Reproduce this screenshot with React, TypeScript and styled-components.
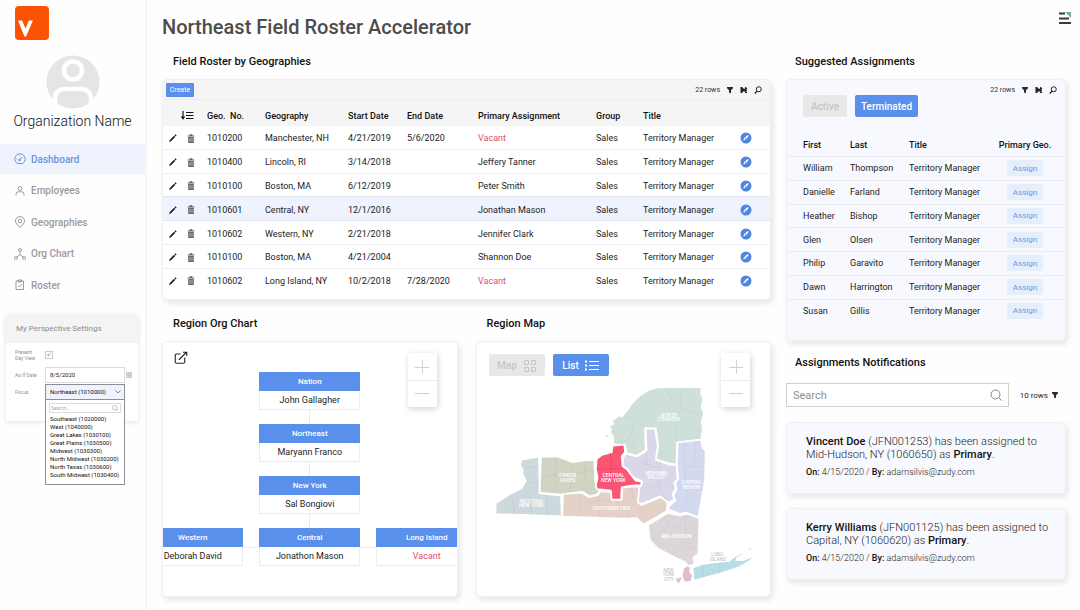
import React from "react";
import styled, { createGlobalStyle } from "styled-components";

const blue = "#5a8fec";

const GlobalStyle = createGlobalStyle`
  *, *::before, *::after { box-sizing: border-box; }
  body {
    margin: 0;
    background: #fefefe;
    color: #1c1c1c;
    font-family: Roboto, "Liberation Sans", sans-serif;
    font-size: 9px;
  }
  button, input, select { font-family: inherit; margin: 0; }
  svg { display: block; }
`;

const Page = styled.div`
  display: flex;
  min-height: 100vh;
`;

/* ---------- sidebar ---------- */

const Sidebar = styled.aside`
  flex: 0 0 147px;
  border-right: 2px solid #f6f6f8;
  padding-top: 6px;
`;

const Logo = styled.svg`
  margin-left: 15px;
`;

const Avatar = styled.svg`
  margin: 15px auto 0;
`;

const OrgName = styled.div`
  margin-top: 2px;
  text-align: center;
  font-size: 14px;
  font-weight: 300;
  line-height: 20px;
  white-space: nowrap;
  color: #111;
`;

const Nav = styled.nav`
  display: flex;
  flex-direction: column;
  justify-content: space-between;
  height: 156px;
  margin-top: 13px;
`;

const NavLink = styled.a<{ $active?: boolean }>`
  display: flex;
  align-items: center;
  gap: 5px;
  height: 30px;
  padding-left: 14px;
  font-size: 10px;
  font-weight: 500;
  text-decoration: none;
  color: ${(p) => (p.$active ? "#6c93d8" : "#9b9b9b")};
  background: ${(p) => (p.$active ? "#eff3fd" : "transparent")};
`;

const Settings = styled.section`
  width: 132px;
  height: 107px;
  margin: 14px 0 0 6px;
  border-radius: 3px;
  background: #fff;
  box-shadow: 0 1px 5px rgba(0, 0, 0, 0.12);
`;

const SettingsTitle = styled.h2`
  margin: 0 0 3px;
  padding-left: 10px;
  border-radius: 3px 3px 0 0;
  background: #f4f4f5;
  font-size: 8px;
  font-weight: 400;
  line-height: 29px;
  color: #8b8b8b;
`;

const SettingRow = styled.div`
  display: grid;
  grid-template-columns: 29px 80px 1fr;
  align-items: center;
  column-gap: 1px;
  height: 17px;
  padding-left: 9px;
  &:first-of-type { margin-bottom: 3px; }
`;

const SettingLabel = styled.label`
  font-size: 5px;
  line-height: 6px;
  color: #8f8f8f;
`;

const SettingCheck = styled.input`
  appearance: none;
  width: 8px;
  height: 8px;
  border: 1px solid #c9c9c9;
  background: #fff;
  &:checked::after {
    content: "";
    display: block;
    width: 2px;
    height: 4px;
    margin: 0 0 0 2px;
    border: solid #aaa;
    border-width: 0 1px 1px 0;
    transform: rotate(40deg);
  }
`;

const DateInput = styled.input`
  width: 80px;
  height: 16px;
  padding: 0 4px;
  border: 1px solid #dcdcdc;
  background: #fff;
  font-size: 6px;
  color: #222;
`;

const FocusBox = styled.div`
  position: relative;
  height: 16px;
`;

const FocusSelect = styled.select`
  appearance: none;
  width: 80px;
  height: 16px;
  padding: 0 4px;
  border: 1px solid #8d8f96;
  border-radius: 0;
  background: #eef3fd;
  font-size: 6px;
  color: #111;
`;

const FocusArrow = styled.svg`
  position: absolute;
  right: 4px;
  top: 6px;
  pointer-events: none;
`;

const FocusMenu = styled.div`
  position: absolute;
  left: 0;
  top: 15px;
  width: 80px;
  height: 86px;
  padding: 3px 3px 0;
  border: 1px solid #8d8f96;
  background: #fff;
`;

const FocusSearch = styled.div`
  display: flex;
  align-items: center;
  height: 10px;
  margin-bottom: 2px;
  padding-right: 2px;
  border: 1px solid #dcdcdc;
  input {
    flex: 1;
    min-width: 0;
    padding: 0 1px;
    border: 0;
    outline: 0;
    background: none;
    font-size: 5px;
    line-height: 8px;
    height: 8px;
  }
  input::placeholder { color: #aaa; }
`;

const FocusList = styled.ul`
  margin: 0;
  padding: 0 0 0 1px;
  list-style: none;
  font-size: 6px;
  line-height: 8px;
  white-space: nowrap;
  color: #111;
`;

/* ---------- main area ---------- */

const Main = styled.main`
  flex: 1;
  min-width: 0;
`;

const Header = styled.header`
  display: flex;
  justify-content: space-between;
  align-items: flex-start;
  height: 54px;
  padding: 11px 8px 0 15px;
`;

const PageTitle = styled.h1`
  margin: 0;
  font-size: 20px;
  font-weight: 500;
  line-height: 32px;
  color: #4c4c4c;
`;

const IconButton = styled.button`
  display: flex;
  align-items: center;
  justify-content: center;
  padding: 0;
  border: 0;
  background: none;
  color: #2b2b2b;
`;

const Content = styled.div`
  display: grid;
  grid-template-columns: minmax(0, 1fr) 280px;
  column-gap: 15px;
  align-items: start;
  padding: 0 14px 14px 15px;
`;

const SplitRow = styled.div`
  display: grid;
  grid-template-columns: minmax(0, 1fr) minmax(0, 1fr);
  column-gap: 18px;
  margin-top: 16px;
`;

const SectionTitle = styled.h2`
  margin: 0 0 9px;
  padding-left: 11px;
  font-size: 11px;
  font-weight: 500;
  line-height: 16px;
  color: #111;
`;

const SideColumn = styled.div`
  ${SectionTitle} { padding-left: 9px; }
`;

const Card = styled.div<{ $tint?: boolean }>`
  position: relative;
  overflow: hidden;
  border: 1px solid #f0f0f3;
  border-radius: 5px;
  background: ${(p) => (p.$tint ? "#f8f9fe" : "#fff")};
  box-shadow: 2px 3px 6px rgba(0, 0, 0, 0.1);
`;

const RosterCard = styled(Card)`
  padding-bottom: 8px;
`;

const RosterBar = styled.div`
  display: flex;
  align-items: center;
  justify-content: space-between;
  height: 20px;
  padding: 0 8px 0 3px;
  border-bottom: 1px solid #ececee;
  background: #f5f5f5;
`;

const CreateButton = styled.button`
  width: 28px;
  height: 14px;
  padding: 0;
  border: 0;
  border-radius: 1px;
  background: ${blue};
  font-size: 7px;
  color: #fff;
`;

const Tools = styled.div`
  display: flex;
  align-items: center;
  gap: 6px;
  font-size: 7px;
  color: #333;
`;

const DataTable = styled.table`
  width: 100%;
  border-collapse: separate;
  border-spacing: 0;
  table-layout: fixed;
  font-size: 9px;
  line-height: 12px;
  white-space: nowrap;
  th, td { padding: 0; text-align: left; vertical-align: middle; }
  th { font-weight: 500; color: #111; }
`;

const RosterTable = styled(DataTable)`
  height: 191px;
  thead tr { height: 26px; }
  th { padding-top: 5px; background: #f5f5f5; }
  td { padding-top: 2px; border-bottom: 1px solid #efeff1; }
  tbody tr:last-child td { border-bottom: 0; }
`;

const RosterRow = styled.tr<{ $selected?: boolean }>`
  td {
    background: ${(p) => (p.$selected ? "#eff3fd" : "transparent")};
    ${(p) => p.$selected && "border-color: #dfe4ef; box-shadow: 0 -1px #dfe4ef;"}
  }
`;

const VacantText = styled.span`
  color: #e0506b;
`;

const IconCell = styled.td`
  && { padding-left: 6px; }
`;

/* ---------- org chart ---------- */

const PanelCard = styled(Card)`
  height: 256px;
`;

const ZoomControl = styled.div`
  position: absolute;
  top: 11px;
  right: 20px;
  width: 29px;
  border-radius: 2px;
  background: #fff;
  box-shadow: 1px 2px 6px rgba(0, 0, 0, 0.18);
  button {
    width: 29px;
    height: 27px;
    color: #d0d0d0;
  }
  button + button { border-top: 1px solid #ececec; }
`;

const PopOut = styled(IconButton)`
  position: absolute;
  left: 11px;
  top: 9px;
`;

const Tree = styled.div`
  display: flex;
  flex-direction: column;
  align-items: center;
  padding-top: 30px;
`;

const Link = styled.div`
  width: 1px;
  height: 14px;
  background: #e9e9ec;
`;

const Branch = styled.div`
  display: flex;
  justify-content: center;
`;

const SideLink = styled.div`
  width: 16px;
  height: 20px;
  border-bottom: 1px solid #ececee;
`;

const Node = styled.div`
  width: 101px;
  flex: none;
  text-align: center;
  border: 1px solid #ececee;
  border-top: 0;
  line-height: 18px;
  background: #fff;
`;

const NodeHead = styled.div`
  margin: 0 -1px;
  height: 19px;
  line-height: 19px;
  font-size: 8px;
  font-weight: 500;
  color: #fff;
  background: ${blue};
`;

/* ---------- map ---------- */

const ButtonRow = styled.div`
  display: flex;
  gap: 8px;
  padding: 12px 0 0 12px;
`;

const ToggleButton = styled.button<{ $on?: boolean; $width: number }>`
  display: flex;
  align-items: center;
  justify-content: center;
  gap: 6px;
  width: ${(p) => p.$width}px;
  height: 22px;
  padding: 0;
  border: 0;
  border-radius: 2px;
  font-size: 10px;
  font-weight: 500;
  color: ${(p) => (p.$on ? "#fff" : "#c6c6c6")};
  background: ${(p) => (p.$on ? blue : "#e8e8e8")};
`;

const MapDrawing = styled.svg`
  margin: 3px 0 0 8px;
`;

/* ---------- right column ---------- */

const SuggestedCard = styled(Card)`
  padding-bottom: 18px;
`;

const SuggestedBar = styled.div`
  display: flex;
  justify-content: space-between;
  align-items: flex-start;
  height: 53px;
  padding: 6px 8px 0 4px;
  ${ButtonRow} { padding-top: 9px; }
`;

const SuggestedTable = styled(DataTable)`
  height: 189px;
  thead tr { height: 24px; }
  th, td { border-bottom: 1px solid #eaecf2; }
  th:first-child, td:first-child { padding-left: 16px; }
  tbody tr:last-child td { border-bottom: 0; }
  th:last-child, td:last-child { text-align: center; }
`;

const AssignButton = styled.button`
  display: block;
  width: 36px;
  height: 16px;
  margin: 0 auto;
  padding: 0;
  border: 0;
  border-radius: 1px;
  background: #e6eefc;
  font-size: 8px;
  color: #6a98e8;
`;

const NoticeHead = styled(SectionTitle)`
  margin: 14px 0 12px;
`;

const SearchRow = styled.div`
  display: flex;
  align-items: center;
  justify-content: space-between;
  height: 24px;
  margin-bottom: 15px;
  padding-right: 7px;
`;

const SearchField = styled.div`
  display: flex;
  align-items: center;
  width: 223px;
  height: 24px;
  padding: 0 6px;
  border: 1px solid #cfcfcf;
  background: #fff;
  input {
    flex: 1;
    min-width: 0;
    padding: 0;
    border: 0;
    outline: 0;
    font-size: 11px;
  }
  input::placeholder { color: #8f8f8f; opacity: 1; }
`;

const RowCount = styled.div`
  display: flex;
  align-items: center;
  gap: 3px;
  font-size: 8px;
`;

const Notice = styled(Card)`
  height: 72px;
  margin-bottom: 14px;
  padding: 12px 0 0 19px;
  font-weight: 300;
  color: #222;
  p {
    margin: 0;
    font-size: 11px;
    line-height: 13px;
    white-space: nowrap;
  }
  p + p {
    margin-top: 5px;
    font-size: 9px;
  }
  b { font-weight: 500; color: #111; }
`;

/* ---------- icons ---------- */

const Pencil = () => (
  <svg width="8" height="8" viewBox="0 0 16 16" fill="#222">
    <path d="M0 16l1.500-4 8.500-8.500 2.500 2.500L4 14.500zM11 2.500l2-1.800 2.300 2.300-2 1.800z" />
  </svg>
);
const Trash = () => (
  <svg width="8" height="9" viewBox="0 0 14 16">
    <path d="M1 2.500h12v2H1zM4.500.5h5V3h-5zM2 5.500h10V16H2z" fill="#666" />
    <path d="M4.800 7v7M7 7v7M9.200 7v7" stroke="#ccc" strokeWidth="1" />
  </svg>
);
const Funnel = () => (
  <svg width="8" height="8" viewBox="0 0 16 16" fill="#2b2b2b">
    <path d="M2 2h12v2.500l-4 4v6l-4-1.500V8.500L2 4.500z" />
  </svg>
);
const Export = () => (
  <svg width="8" height="8" viewBox="0 0 16 16" fill="#222">
    <path d="M1 2h3l4 4 2-1V2h1l4 2.500L12 7h2v7h-4v-3H5v3H1z" />
    <path d="M11.500 9.500h1.500v2h-1.500z" fill="#f5f5f5" />
  </svg>
);
const Magnifier = () => (
  <svg width="8" height="8" viewBox="0 0 16 16" fill="none" stroke="#222" strokeWidth="2">
    <circle cx="9.500" cy="6.500" r="5" />
    <path d="M6 10.500L1.500 15" strokeWidth="2.600" />
  </svg>
);
const SearchGlass = ({ size }: { size: number }) => (
  <svg width={size} height={size} viewBox="0 0 16 16" fill="none" stroke="#808080" strokeWidth="1.300">
    <circle cx="7.300" cy="7.300" r="6" />
    <path d="M11.700 11.700L15.500 15.500" />
  </svg>
);
const SortIcon = () => (
  <svg width="13" height="9" viewBox="0 0 26 18" fill="none" stroke="#111" strokeWidth="2.400">
    <path d="M4 0v15M0.800 11L4 15.500 7.200 11M10 3h15M10 9h15M10 15h15" />
  </svg>
);
const Compass = () => (
  <svg width="12" height="12" viewBox="0 0 24 24">
    <circle cx="12" cy="12" r="11" fill="#4f86e0" />
    <path d="M6.500 17.500l1.800-5 5-5 4-1.500-1.300 4-5 5z" fill="#fff" />
    <path d="M9.500 14.500l3-3" stroke="#4f86e0" strokeWidth="1.200" />
  </svg>
);
const ZoomButtons = () => (
  <ZoomControl>
    <IconButton aria-label="Zoom in">
      <svg width="14" height="14" viewBox="0 0 14 14" stroke="currentColor"><path d="M0 7.500h14M7.500 0v14" /></svg>
    </IconButton>
    <IconButton aria-label="Zoom out">
      <svg width="14" height="14" viewBox="0 0 14 14" stroke="currentColor"><path d="M0 6.500h14" /></svg>
    </IconButton>
  </ZoomControl>
);
const ToolSet = () => (
  <Tools>
    <span>22 rows</span>
    <IconButton aria-label="Filter"><Funnel /></IconButton>
    <IconButton aria-label="Export"><Export /></IconButton>
    <IconButton aria-label="Find"><Magnifier /></IconButton>
  </Tools>
);

const navIcons: Record<string, React.ReactNode> = {
  Dashboard: (
    <>
      <path d="M6.500 21a10.500 10.500 0 1 1 11 0z" />
      <circle cx="11" cy="14" r="2" />
      <path d="M12.500 12.500L16.500 8M12 5v1M5 12h1" />
    </>
  ),
  Employees: (
    <>
      <circle cx="12" cy="7" r="4" />
      <path d="M4 21v-2.500a5 5 0 0 1 5-5h6a5 5 0 0 1 5 5V21" />
    </>
  ),
  Geographies: (
    <>
      <path d="M12 23C6 17.500 3 14 3 10a9 9 0 0 1 18 0c0 4-3 7.500-9 13z" />
      <circle cx="12" cy="10" r="3.500" />
    </>
  ),
  "Org Chart": (
    <>
      <circle cx="12" cy="4" r="3" />
      <circle cx="3.500" cy="20" r="3" />
      <circle cx="20.500" cy="20" r="3" />
      <path d="M12 7v6M12 13l-6 5M12 13l6 5" />
    </>
  ),
  Roster: (
    <>
      <path d="M4 4h15v17H4zM8 2h7v4H8z" />
      <path d="M8 13l3 3 5-6" />
    </>
  ),
};

/* ---------- data ---------- */

const roster = [
  ["1010200", "Manchester, NH", "4/21/2019", "5/6/2020", "Vacant"],
  ["1010400", "Lincoln, RI", "3/14/2018", "", "Jeffery Tanner"],
  ["1010100", "Boston, MA", "6/12/2019", "", "Peter Smith"],
  ["1010601", "Central, NY", "12/1/2016", "", "Jonathan Mason"],
  ["1010602", "Western, NY", "2/21/2018", "", "Jennifer Clark"],
  ["1010100", "Boston, MA", "4/21/2004", "", "Shannon Doe"],
  ["1010602", "Long Island, NY", "10/2/2018", "7/28/2020", "Vacant"],
];

const suggested = [
  ["William", "Thompson"],
  ["Danielle", "Farland"],
  ["Heather", "Bishop"],
  ["Glen", "Olsen"],
  ["Philip", "Garavito"],
  ["Dawn", "Harrington"],
  ["Susan", "Gillis"],
];

const focusOptions = [
  "Southeast (1020000)",
  "West (1040000)",
  "Great Lakes (1030100)",
  "Great Plains (1030500)",
  "Midwest (1030300)",
  "North Midwest (1030200)",
  "North Texas (1030600)",
  "South Midwest (1030400)",
];

const notices = [
  { name: "Vincent Doe", id: "JFN001253", place: "Mid-Hudson, NY (1060650)" },
  { name: "Kerry Williams", id: "JFN001125", place: "Capital, NY (1060620)" },
];

const regions = [
  { fill: "#cfe0d9", d: "M383 195L385 176 380 166 372 158 379 152 370 142 386 134 378 124 392 118 402 108 410 113 425 95 441 72 470 45 492 32 515 25 650 24 648 45 655 60 650 85 657 102 650 130 654 150 648 182 576 190 574 257 548 252 513 240 520 200 512 148 480 148 482 213 455 230 425 222 420 198Z" },
  { fill: "#cdd9dc", d: "M108 242L162 233 164 343 228 350 230 412 32 405 32 373 75 345 110 327 123 305 112 285 113 268 105 262Z" },
  { fill: "#d0d5c3", d: "M168 233L215 232 238 240 262 250 285 246 328 243 330 300 334 325 343 335 338 345 315 352 293 338 228 347 164 341Z" },
  { fill: "#e4d2c9", d: "M234 345L290 341 313 354 340 348 345 338 378 338 380 362 410 362 412 326 440 323 462 322 460 372 470 378 528 354 548 368 545 397 475 437 455 417 415 419 232 413Z" },
  { fill: "#dad7e8", d: "M482 150L510 148 518 200 512 242 548 256 574 258 578 300 568 310 572 330 562 348 570 360 550 372 525 352 470 375 459 370 463 325 470 318 470 306 445 295 425 268 412 262 415 235 424 224 455 233 485 215Z" },
  { fill: "#d3daef", d: "M578 190L648 183 652 205 662 215 660 300 652 350 640 415 600 400 585 405 548 390 555 378 572 365 565 350 575 330 570 312 580 300 576 260Z" },
  { fill: "#dcd6db", d: "M548 402L585 409 610 404 643 418 640 525 625 535 628 555 612 562 600 550 560 530 520 510 495 485 489 438Z" },
  { fill: "#fb5574", d: "M383 200L418 197 420 220 410 232 413 262 425 270 440 290 452 305 470 308 468 318 440 320 410 325 408 362 380 362 378 335 335 330 333 315 338 300 333 270 335 240 350 228 380 220Z" },
];

const mapLabels: [string, number, number][] = [
  ["NORTH", 552, 113], ["COUNTRY", 552, 127],
  ["FINGER", 248, 294], ["LAKES", 248, 308],
  ["CENTRAL", 385, 294], ["NEW YORK", 385, 308],
  ["MOHAWK", 514, 287], ["VALLEY", 514, 301],
  ["CAPITAL", 620, 315], ["REGION", 620, 329],
  ["WESTERN", 139, 371], ["NEW YORK", 139, 385],
  ["SOUTHERN TIER", 379, 394],
  ["MID-HUDSON", 575, 476],
];

const StateMap = () => (
  <MapDrawing width="280" height="220" viewBox="0 0 840 660" role="img" aria-label="New York regions">
    <g stroke="#fff" strokeWidth="5" strokeLinejoin="round">
      {regions.map((r) => (
        <path key={r.d} d={r.d} fill={r.fill} />
      ))}
    </g>
    <path
      d="M542 27L560 60 562 85M585 25L590 88 640 105M590 88L572 120 575 188M422 112L450 120 480 142M450 120L438 160 455 225M392 190L438 180M110 268L160 262M120 318L164 305M80 345L92 408M135 345L140 410M185 348L188 410M212 235L210 345M165 295L210 285 255 300M262 250L255 343M300 246L296 338M255 285L330 275M285 345L288 412M345 340L340 372 345 415M300 372L378 362M410 362L430 385 428 415M440 325L445 365M530 215L518 300 530 350M470 250L520 268M485 215L480 290M470 330L530 310M600 190L598 260 655 265M630 185L628 250M598 260L605 330 655 330M605 330L600 400M540 405L548 440 520 470M548 440L575 445 600 410M600 410L603 480 640 465M603 480L560 525M600 505L640 510"
      fill="none"
      stroke="#8a8f98"
      strokeOpacity="0.22"
      strokeWidth="1.500"
    />
    <path d="M335 270L412 268M375 222L378 262M378 300L380 335M378 268L375 300M338 300L378 305" fill="none" stroke="#e23b5c" strokeWidth="1.500" />
    <path d="M625 568L650 558 690 552 735 548 742 540 755 535 750 546 775 546 803 534 790 546 760 563 700 583 665 592 628 602Z" fill="#b8dde6" />
    <path d="M745 540L770 524M790 512L798 508M655 560L652 594M705 552L702 582" stroke="#a9ced8" strokeWidth="2" fill="none" />
    <path d="M597 570L606 563 614 566 612 578 621 590 616 605 600 607 594 592ZM573 600L590 596 580 613Z" fill="#e0bfd0" stroke="#c9a3b8" strokeWidth="1" />
    <path d="M361 168L370 172" stroke="#cfe0d9" strokeWidth="4" />
    <g fill="#fff" fontSize="15" fontWeight="500" textAnchor="middle">
      {mapLabels.map(([label, x, y]) => (
        <text key={label + x} x={x} y={y}>{label}</text>
      ))}
    </g>
    <g fill="#b9b9bd" fontSize="14" textAnchor="middle">
      <text x="697" y="531">LONG</text>
      <text x="699" y="545">ISLAND</text>
      <text x="551" y="578">NEW</text>
      <text x="551" y="592">YORK</text>
      <text x="551" y="606">CITY</text>
    </g>
  </MapDrawing>
);

const OrgNode = ({ title, name }: { title: string; name: string }) => (
  <Node>
    <NodeHead>{title}</NodeHead>
    {name === "Vacant" ? <VacantText>{name}</VacantText> : name}
  </Node>
);

export default function App() {
  return (
    <>
      <GlobalStyle />
      <Page>
        <Sidebar>
          <Logo width="34" height="34" viewBox="0 0 34 34" role="img" aria-label="Logo">
            <rect width="34" height="34" rx="4" fill="#fc5204" />
            <path d="M3 14.500L7 14.500 10.500 22.500 14 14.500 18 14.500 11 30.500 9.500 30.500Z" fill="#fff" />
          </Logo>
          <Avatar width="54" height="54" viewBox="0 0 54 54">
            <circle cx="27" cy="27" r="26.500" fill="#e5e5e5" />
            <circle cx="27" cy="15.500" r="9" fill="#e5e5e5" stroke="#fff" strokeWidth="4.500" />
            <path d="M9 54V43a9 9 0 0 1 9-9h18a9 9 0 0 1 9 9v11" fill="none" stroke="#fff" strokeWidth="4.500" />
          </Avatar>
          <OrgName>Organization Name</OrgName>
          <Nav>
            {Object.keys(navIcons).map((label) => (
              <NavLink key={label} href="#" $active={label === "Dashboard"}>
                <svg width="12" height="12" viewBox="0 0 24 24" fill="none" stroke="currentColor" strokeWidth="2">
                  {navIcons[label]}
                </svg>
                {label}
              </NavLink>
            ))}
          </Nav>
          <Settings>
            <SettingsTitle>My Perspective Settings</SettingsTitle>
            <SettingRow>
              <SettingLabel htmlFor="present">
                Present
                <br />
                Day View
              </SettingLabel>
              <SettingCheck id="present" type="checkbox" defaultChecked />
            </SettingRow>
            <SettingRow>
              <SettingLabel htmlFor="asof">As If Date</SettingLabel>
              <DateInput id="asof" defaultValue="8/5/2020" />
              <svg width="6" height="6" viewBox="0 0 12 12" fill="none" stroke="#999">
                <path d="M1 1h10v10H1zM1 4h10M1 7.500h10M4.500 1v10M8 1v10" />
              </svg>
            </SettingRow>
            <SettingRow>
              <SettingLabel htmlFor="focus">Focus</SettingLabel>
              <FocusBox>
                <FocusSelect id="focus">
                  <option>Northeast (1010000)</option>
                </FocusSelect>
                <FocusArrow width="6" height="4" viewBox="0 0 12 8" fill="none" stroke="#666" strokeWidth="1.600">
                  <path d="M1 1l5 5 5-5" />
                </FocusArrow>
                <FocusMenu>
                  <FocusSearch>
                    <input aria-label="Search focus" placeholder="Search..." />
                    <SearchGlass size={6} />
                  </FocusSearch>
                  <FocusList>
                    {focusOptions.map((o) => (
                      <li key={o}>{o}</li>
                    ))}
                  </FocusList>
                </FocusMenu>
              </FocusBox>
            </SettingRow>
          </Settings>
        </Sidebar>

        <Main>
          <Header>
            <PageTitle>Northeast Field Roster Accelerator</PageTitle>
            <IconButton aria-label="Menu">
              <svg width="14" height="14" viewBox="0 0 14 14">
                <path d="M1 2.500h6M1 7.500h10M1 12h12" stroke="#3b3b3b" strokeWidth="2" />
                <path d="M7 1h6v6z" fill="#77b38c" />
              </svg>
            </IconButton>
          </Header>
          <Content>
            <div>
              <SectionTitle>Field Roster by Geographies</SectionTitle>
              <RosterCard>
                <RosterBar>
                  <CreateButton>Create</CreateButton>
                  <ToolSet />
                </RosterBar>
                <RosterTable>
                  <colgroup>
                    <col width="18" /><col width="26" /><col width="58" /><col width="83" /><col width="59" />
                    <col width="71" /><col /><col width="47" /><col width="91" /><col width="36" />
                  </colgroup>
                  <thead>
                    <tr>
                      <th />
                      <th><SortIcon /></th>
                      <th>Geo.&nbsp; No.</th>
                      <th>Geography</th>
                      <th>Start Date</th>
                      <th>End Date</th>
                      <th>Primary Assignment</th>
                      <th>Group</th>
                      <th>Title</th>
                      <th />
                    </tr>
                  </thead>
                  <tbody>
                    {roster.map((r, i) => (
                      <RosterRow key={i} $selected={i === 3}>
                        <IconCell><IconButton aria-label="Edit"><Pencil /></IconButton></IconCell>
                        <IconCell><IconButton aria-label="Delete"><Trash /></IconButton></IconCell>
                        {r.map((cell, j) => (
                          <td key={j}>{cell === "Vacant" ? <VacantText>{cell}</VacantText> : cell}</td>
                        ))}
                        <td>Sales</td>
                        <td>Territory Manager</td>
                        <IconCell><IconButton aria-label="Locate"><Compass /></IconButton></IconCell>
                      </RosterRow>
                    ))}
                  </tbody>
                </RosterTable>
              </RosterCard>
              <SplitRow>
                <div>
                  <SectionTitle>Region Org Chart</SectionTitle>
                  <PanelCard>
                    <PopOut aria-label="Open in new window">
                      <svg width="14" height="14" viewBox="0 0 28 28" fill="none" stroke="#222" strokeWidth="2.200">
                        <path d="M13 6H5a2.500 2.500 0 0 0-2.500 2.500V22A2.500 2.500 0 0 0 5 24.500h14a2.500 2.500 0 0 0 2.500-2.500v-9M10 17.500L24 3.500M18 2.500h7.500V10" />
                      </svg>
                    </PopOut>
                    <ZoomButtons />
                    <Tree>
                      <OrgNode title="Nation" name="John Gallagher" />
                      <Link />
                      <OrgNode title="Northeast" name="Maryann Franco" />
                      <Link />
                      <OrgNode title="New York" name="Sal Bongiovi" />
                      <Link />
                      <Branch>
                        <OrgNode title="Western" name="Deborah David" />
                        <SideLink />
                        <OrgNode title="Central" name="Jonathon Mason" />
                        <SideLink />
                        <OrgNode title="Long Island" name="Vacant" />
                      </Branch>
                    </Tree>
                  </PanelCard>
                </div>
                <div>
                  <SectionTitle>Region Map</SectionTitle>
                  <PanelCard>
                    <ZoomButtons />
                    <ButtonRow>
                      <ToggleButton $width={56}>
                        Map
                        <svg width="13" height="13" viewBox="0 0 13 13" fill="none" stroke="currentColor">
                          <path d="M1.500 1.500h4v4h-4zM8.500 1.500h4v4h-4zM1.500 8.500h4v4h-4zM8.500 8.500h4v4h-4z" />
                        </svg>
                      </ToggleButton>
                      <ToggleButton $on $width={56}>
                        List
                        <svg width="14" height="11" viewBox="0 0 14 11" stroke="currentColor">
                          <path d="M4 1.500h10M4 5.500h10M4 9.500h10" />
                          <path d="M0 1.500h2M0 5.500h2M0 9.500h2" strokeWidth="2" />
                        </svg>
                      </ToggleButton>
                    </ButtonRow>
                    <StateMap />
                  </PanelCard>
                </div>
              </SplitRow>
            </div>

            <SideColumn>
              <SectionTitle>Suggested Assignments</SectionTitle>
              <SuggestedCard $tint>
                <SuggestedBar>
                  <ButtonRow>
                    <ToggleButton $width={44}>Active</ToggleButton>
                    <ToggleButton $on $width={63}>Terminated</ToggleButton>
                  </ButtonRow>
                  <ToolSet />
                </SuggestedBar>
                <SuggestedTable>
                  <colgroup>
                    <col width="63" /><col width="59" /><col /><col width="80" />
                  </colgroup>
                  <thead>
                    <tr>
                      <th>First</th>
                      <th>Last</th>
                      <th>Title</th>
                      <th>Primary Geo.</th>
                    </tr>
                  </thead>
                  <tbody>
                    {suggested.map(([first, last]) => (
                      <tr key={first}>
                        <td>{first}</td>
                        <td>{last}</td>
                        <td>Territory Manager</td>
                        <td><AssignButton>Assign</AssignButton></td>
                      </tr>
                    ))}
                  </tbody>
                </SuggestedTable>
              </SuggestedCard>
              <NoticeHead>Assignments Notifications</NoticeHead>
              <SearchRow>
                <SearchField>
                  <input aria-label="Search notifications" placeholder="Search" />
                  <SearchGlass size={12} />
                </SearchField>
                <RowCount>
                  10 rows
                  <IconButton aria-label="Filter notifications"><Funnel /></IconButton>
                </RowCount>
              </SearchRow>
              {notices.map((n) => (
                <Notice key={n.id} $tint>
                  <p>
                    <b>{n.name}</b> ({n.id}) has been assigned to
                    <br />
                    {n.place} as <b>Primary</b>.
                  </p>
                  <p>
                    <b>On:</b> 4/15/2020 / <b>By:</b> adamsilvis@zudy.com
                  </p>
                </Notice>
              ))}
            </SideColumn>
          </Content>
        </Main>
      </Page>
    </>
  );
}
